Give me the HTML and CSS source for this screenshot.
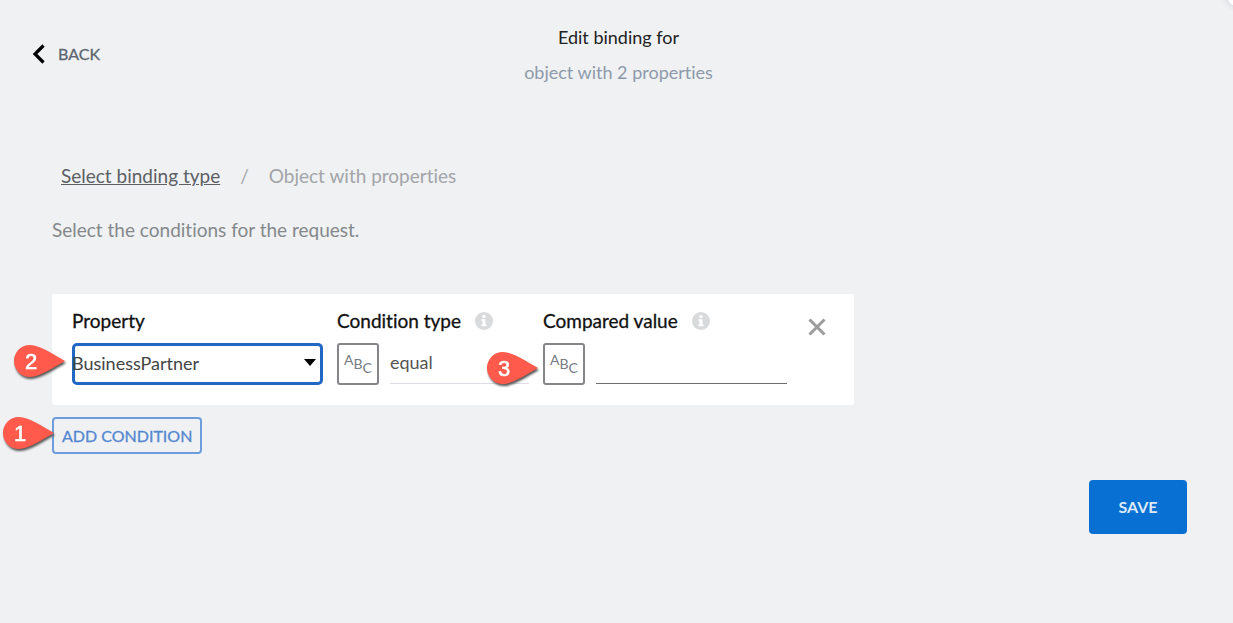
FILE: index.html
```html
<!DOCTYPE html>
<html lang="en">
<head>
<meta charset="utf-8">
<meta name="viewport" content="width=device-width, initial-scale=1">
<title>Edit binding</title>
<link rel="stylesheet" href="styles.css">
</head>
<body>
<svg class="defs" width="0" height="0" aria-hidden="true">
  <symbol id="pin" viewBox="0 0 56 40">
    <path d="M18 2C8.500 2 2 9.500 2 18S8.500 34 18 34C28 34 42 24 53 18C42 12 28 2 18 2Z"/>
  </symbol>
  <symbol id="info" viewBox="0 0 18 18">
    <circle cx="9" cy="9" r="9" fill="#d9dadc"/>
    <circle cx="9" cy="4.500" r="1.700" fill="#fff"/>
    <path d="M6.500 7.200h4v5.300h1V14.200h-5v-1.700h1V9h-1z" fill="#fff"/>
  </symbol>
</svg>
<header class="header">
  <button class="back" type="button">
    <svg width="13" height="20" viewBox="0 0 13 20" aria-hidden="true"><path d="M11.500 1.500L3 10L11.500 18.500" fill="none" stroke="#000" stroke-width="3.200"/></svg>
    <span>BACK</span>
  </button>
  <div class="heading">
    <h1 class="title">Edit binding for</h1>
    <p class="subtitle">object with 2 properties</p>
  </div>
</header>
<main class="main">
  <nav class="crumbs">
    <a class="crumb-link" href="#type">Select binding type</a>
    <span>/</span>
    <span>Object with properties</span>
  </nav>
  <p class="hint">Select the conditions for the request.</p>
  <section class="card">
    <div class="field property">
      <label class="label" for="property">Property</label>
      <div class="select-box">
        <select class="select" id="property"><option>BusinessPartner</option></select>
        <svg class="arrow" width="12" height="7" viewBox="0 0 12 7" aria-hidden="true"><path d="M0 0h12L6 7z"/></svg>
        <div class="pin"><svg width="56" height="40" aria-hidden="true"><use href="#pin"/></svg><span class="pin-number">2</span></div>
      </div>
    </div>
    <div class="field condition">
      <div class="label-row">
        <label class="label" for="condition">Condition type</label>
        <svg width="18" height="18" aria-hidden="true"><use href="#info"/></svg>
      </div>
      <div class="control">
        <button class="abc" type="button"><span class="a">A</span><span class="b">B</span><span class="c">C</span></button>
        <input class="input" id="condition" type="text" value="equal">
      </div>
    </div>
    <div class="field compared">
      <div class="label-row">
        <label class="label" for="compared">Compared value</label>
        <svg width="18" height="18" aria-hidden="true"><use href="#info"/></svg>
      </div>
      <div class="control">
        <button class="abc" type="button"><span class="a">A</span><span class="b">B</span><span class="c">C</span></button>
        <input class="input input-dark" id="compared" type="text">
        <div class="pin pin-low"><svg width="56" height="40" aria-hidden="true"><use href="#pin"/></svg><span class="pin-number">3</span></div>
      </div>
    </div>
    <button class="close" type="button" aria-label="Remove condition">
      <svg width="18" height="18" viewBox="0 0 18 18" aria-hidden="true"><path d="M1.500 1.500l15 15M16.500 1.500l-15 15" stroke="#9c9c9c" stroke-width="3"/></svg>
    </button>
  </section>
  <div class="add-row">
    <button class="add" type="button">ADD CONDITION</button>
    <div class="pin pin-add"><svg width="56" height="40" aria-hidden="true"><use href="#pin"/></svg><span class="pin-number">1</span></div>
  </div>
</main>
<footer class="footer">
  <button class="save" type="button">SAVE</button>
</footer>
<div class="corner"></div>
</body>
</html>
```
FILE: styles.css
```css
* {
  box-sizing: border-box;
}

body {
  position: relative;
  margin: 0;
  min-height: 100vh;
  overflow-x: hidden;
  background: #eff1f3;
  color: #222;
  font-family: Lato, sans-serif;
  font-size: 18px;
  font-variant-ligatures: none;
  line-height: 24px;
}

button,
input,
select {
  margin: 0;
  padding: 0;
  border: 0;
  background: none;
  color: inherit;
  font: inherit;
}

h1,
p {
  margin: 0;
}

svg {
  display: block;
  flex: none;
}

.defs {
  position: absolute;
}

.header {
  display: grid;
  grid-template-columns: 1fr auto 1fr;
  padding: 25px 28px 0 32px;
}

.back {
  display: flex;
  align-items: center;
  justify-self: start;
  gap: 13px;
  height: 24px;
  margin-top: 17px;
  color: #5d6670;
  font-size: 16px;
  -webkit-text-stroke: 0.3px #5d6670;
}

.heading {
  text-align: center;
}

.title {
  font-size: 18px;
  font-weight: 400;
}

.subtitle {
  margin-top: 11px;
  color: #8e9aab;
}

.main {
  padding: 80px 52px 0;
}

.crumbs {
  display: flex;
  gap: 20px;
  padding-left: 9px;
  color: #a3a5a8;
  font-size: 19px;
}

.crumb-link {
  color: #5c6065;
}

.hint {
  margin-top: 30px;
  color: #85888b;
  font-size: 19px;
}

.card {
  display: flex;
  align-items: flex-start;
  gap: 14px;
  max-width: 802px;
  margin-top: 52px;
  padding: 15px 28px 20px 20px;
  border-radius: 2px;
  background: #fff;
}

.property {
  flex: 251 1 0;
}

.condition {
  flex: 192 1 0;
}

.compared {
  flex: 243 1 0;
}

.field {
  min-width: 0;
}

.label-row {
  display: flex;
  align-items: center;
  gap: 14px;
}

.label {
  display: block;
  color: #111;
  font-size: 19px;
  -webkit-text-stroke: 0.3px #111;
}

.label-row .label {
  white-space: nowrap;
}

.select-box,
.control {
  position: relative;
  display: flex;
  margin-top: 10px;
}

.select {
  width: 100%;
  height: 42px;
  padding-bottom: 3px;
  border-radius: 5px;
  box-shadow: inset 0 0 0 3px #2167c4;
  appearance: none;
  color: #444;
}

.arrow {
  position: absolute;
  top: 16px;
  right: 7px;
}

.control {
  gap: 11px;
}

.abc {
  display: flex;
  flex: none;
  align-items: center;
  justify-content: center;
  width: 42px;
  height: 42px;
  border: 2px solid #85868a;
  border-radius: 3px;
  color: #777b82;
  font-size: 14px;
}

.a {
  padding-bottom: 8px;
}

.c {
  padding-top: 8px;
}

.input {
  flex: 1;
  min-width: 0;
  height: 41px;
  padding-bottom: 3px;
  border-bottom: 1px solid #dcdde5;
  border-radius: 0;
  color: #555;
}

.input-dark {
  flex: none;
  width: 191px;
  border-bottom-color: #707070;
}

.close {
  margin: 9px 0 0 8px;
}

.add-row {
  position: relative;
  display: flex;
  margin-top: 12px;
}

.add {
  height: 37px;
  padding: 0 8px;
  border: 2px solid #6e9ddb;
  border-radius: 4px;
  color: #5387d0;
  font-size: 16px;
  -webkit-text-stroke: 0.3px #5387d0;
}

.pin {
  position: absolute;
  top: 0;
  left: -60px;
  width: 56px;
  height: 40px;
  fill: #ff5a4b;
  filter: drop-shadow(1px 2px 1px #555);
}

.pin-low {
  top: 7px;
  left: -58px;
}

.pin-add {
  top: -2px;
  left: -51px;
}

.pin-number {
  position: absolute;
  top: 7px;
  left: 13px;
  color: #fff;
  font-family: "Liberation Sans", Arial, sans-serif;
  font-size: 22px;
  -webkit-text-stroke: 0.6px #fff;
}

.footer {
  display: flex;
  justify-content: flex-end;
  padding: 26px 46px 24px;
}

.save {
  min-width: 98px;
  height: 54px;
  border-radius: 4px;
  background: #0870d2;
  color: #dbe9f8;
  font-size: 16px;
  font-weight: 700;
}

.corner {
  position: absolute;
  top: -14px;
  right: -14px;
  width: 20px;
  height: 20px;
  border-radius: 50%;
  background: #fff;
  box-shadow: 0 0 6px #c4c6ca;
}
```
